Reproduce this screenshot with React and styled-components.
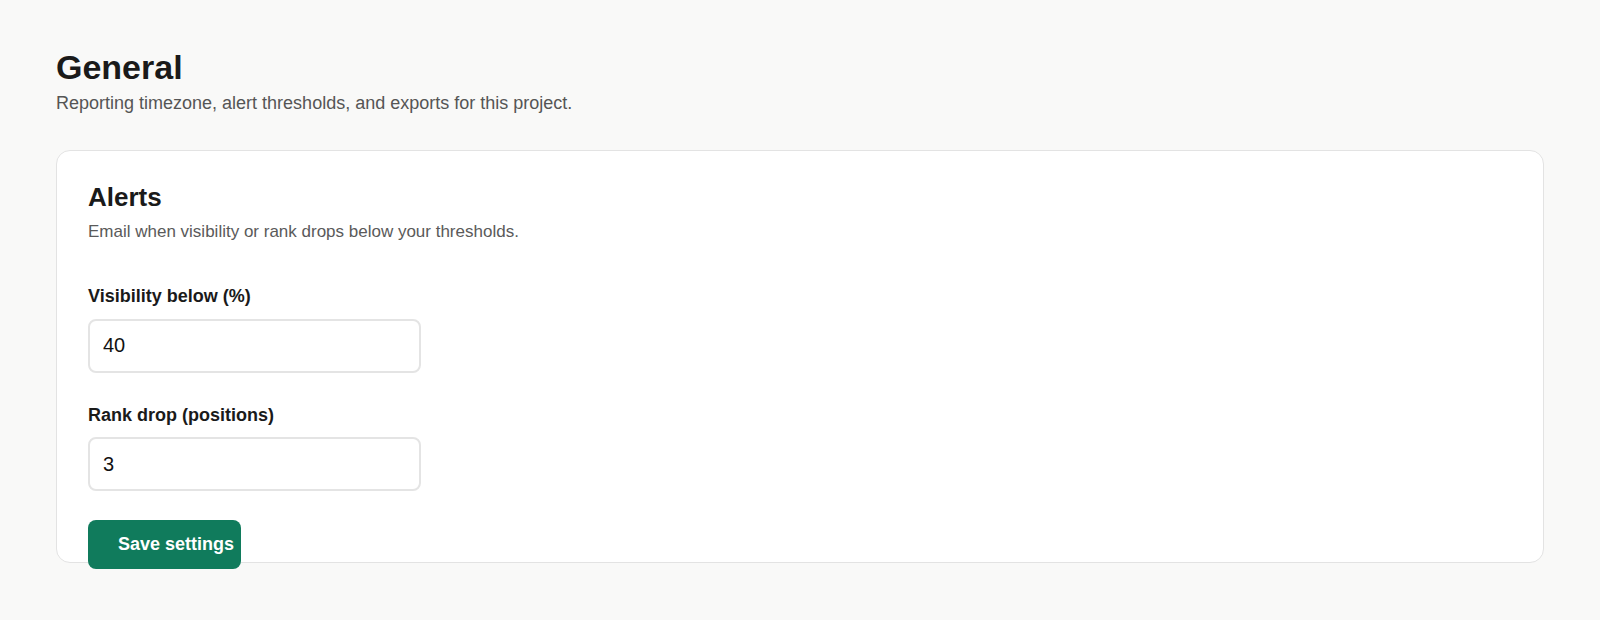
import React, { useState } from 'react';
import styled, { createGlobalStyle } from 'styled-components';

const GlobalStyle = createGlobalStyle`
  html, body {
    margin: 0;
    padding: 0;
    background: #f9f9f8;
  }
  body {
    font-family: 'Liberation Sans', Arial, sans-serif;
    color: #1a1a1a;
  }
  * { box-sizing: border-box; }
`;

const Page = styled.main`
  padding: 47px 56px 56px;
  min-height: 620px;
`;

const PageTitle = styled.h1`
  margin: 0;
  font-size: 34px;
  line-height: 1.2;
  font-weight: 700;
  color: #1a1a1a;
`;

const PageSubtitle = styled.p`
  margin: 5px 0 0;
  font-size: 18px;
  line-height: 1.2;
  color: #555;
`;

// the card keeps a fixed height, so the save button hangs over its bottom edge
const Card = styled.section`
  margin-top: 36px;
  height: 413px;
  padding: 31px;
  background: #fff;
  border: 1px solid #e3e3e3;
  border-radius: 14px;
`;

const CardTitle = styled.h2`
  margin: 0;
  font-size: 26px;
  line-height: 1.2;
  font-weight: 700;
  color: #1a1a1a;
`;

const CardText = styled.p`
  margin: 8px 0 0;
  font-size: 17px;
  line-height: 1.2;
  color: #5a5a5a;
`;

const Form = styled.form`
  display: flex;
  flex-direction: column;
  align-items: flex-start;
  margin-top: 44px;
`;

const Field = styled.div`
  display: flex;
  flex-direction: column;
  gap: 11px;
  margin-bottom: ${p => p.$last ? '29px' : '32px'};
`;

const Label = styled.label`
  font-size: 18px;
  line-height: 1.2;
  font-weight: 700;
  color: #1a1a1a;
`;

const Input = styled.input`
  width: 333px;
  height: 54px;
  padding: 0 13px;
  border: 2px solid #e4e4e4;
  border-radius: 8px;
  background: #fff;
  font-family: 'Liberation Sans', Arial, sans-serif;
  font-size: 20px;
  color: #111;
  outline: none;

  &:focus { border-color: #107b5c; }
`;

const SaveButton = styled.button`
  height: 49px;
  padding: 0 7px 0 30px;
  border: none;
  border-radius: 8px;
  background: #107b5c;
  color: #fff;
  font-family: 'Liberation Sans', Arial, sans-serif;
  font-size: 18px;
  font-weight: 700;
  cursor: pointer;

  &:hover { background: #0d6b50; }
`;

export default function App() {
  const [visibility, setVisibility] = useState('40');
  const [rankDrop, setRankDrop] = useState('3');

  return (
    <>
      <GlobalStyle />
      <Page>
        <PageTitle>General</PageTitle>
        <PageSubtitle>Reporting timezone, alert thresholds, and exports for this project.</PageSubtitle>

        <Card>
          <CardTitle>Alerts</CardTitle>
          <CardText>Email when visibility or rank drops below your thresholds.</CardText>

          <Form onSubmit={e => e.preventDefault()}>
            <Field>
              <Label htmlFor="visibility">Visibility below (%)</Label>
              <Input id="visibility" value={visibility} onChange={e => setVisibility(e.target.value)} />
            </Field>
            <Field $last>
              <Label htmlFor="rank-drop">Rank drop (positions)</Label>
              <Input id="rank-drop" value={rankDrop} onChange={e => setRankDrop(e.target.value)} />
            </Field>
            <SaveButton type="submit">Save settings</SaveButton>
          </Form>
        </Card>
      </Page>
    </>
  );
}
